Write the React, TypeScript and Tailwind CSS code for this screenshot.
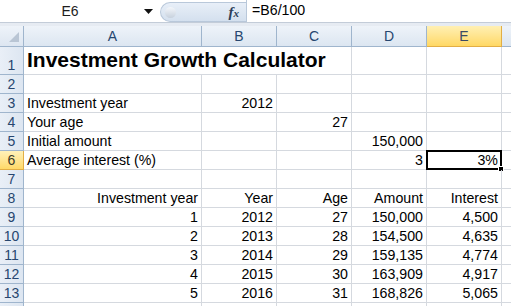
import React from 'react';

type Row = {
  n: number;
  cells: (string | null)[];
  align?: ('l' | 'r')[];
};

const grid = 'border-r border-b border-[#d5d9df]';
const R: ('l' | 'r')[] = ['r', 'r', 'r', 'r', 'r'];

const rows: Row[] = [
  { n: 2, cells: [null, null, null, null, null] },
  { n: 3, cells: ['Investment year', '2012', null, null, null] },
  { n: 4, cells: ['Your age', null, '27', null, null] },
  { n: 5, cells: ['Initial amount', null, null, '150,000', null] },
  { n: 6, cells: ['Average interest (%)', null, null, '3', '3%'] },
  { n: 7, cells: [null, null, null, null, null] },
  { n: 8, cells: ['Investment year', 'Year', 'Age', 'Amount', 'Interest'], align: R },
  { n: 9, cells: ['1', '2012', '27', '150,000', '4,500'], align: R },
  { n: 10, cells: ['2', '2013', '28', '154,500', '4,635'], align: R },
  { n: 11, cells: ['3', '2014', '29', '159,135', '4,774'], align: R },
  { n: 12, cells: ['4', '2015', '30', '163,909', '4,917'], align: R },
  { n: 13, cells: ['5', '2016', '31', '168,826', '5,065'], align: R },
  { n: 14, cells: [null, null, null, null, null] },
];

function RowHead({ n, active }: { n: number; active?: boolean }) {
  return (
    <div
      className={`flex items-end justify-center pb-[1px] text-[14px] leading-[16px] border-r border-b ${
        active
          ? 'bg-gradient-to-b from-[#fff1b8] to-[#ffd967] border-[#e2ae45] text-[#3a3a2a]'
          : 'bg-gradient-to-r from-[#e9eff7] to-[#dde6f1] border-[#9fb5cd] text-[#27466f]'
      }`}
    >
      {/* last row is only a sliver at the bottom edge */}
      {n < 14 ? n : null}
    </div>
  );
}

function Cell({ text, right, selected }: { text: string | null; right?: boolean; selected?: boolean }) {
  return (
    <div
      className={`relative flex items-end pb-[1px] px-[3px] text-[14.2px] leading-[16px] text-black ${grid} ${
        right ? 'justify-end' : 'justify-start'
      }`}
    >
      {text}
      {selected && (
        <>
          <div className="absolute -left-[1px] -top-[1px] -right-[1px] -bottom-[1px] border-2 border-black" />
          <div className="absolute -right-[3px] -bottom-[3px] h-[6px] w-[6px] border border-white bg-black" />
        </>
      )}
    </div>
  );
}

export default function App() {
  const cols = ['A', 'B', 'C', 'D', 'E'];
  return (
    <div className="h-[306px] w-[511px] overflow-hidden bg-white font-['Liberation_Sans',Arial,sans-serif]">
      {/* formula bar */}
      <div className="flex h-[23px] border-b border-[#c3ccd8] bg-white">
        <div className="flex w-[140px] items-center justify-center text-[14px] text-[#1d1d1d]">E6</div>
        <div className="flex w-[20px] items-center">
          <svg width="9" height="5" viewBox="0 0 9 5" className="ml-[4px]">
            <path d="M0 0h9L4.5 5z" fill="#111" />
          </svg>
        </div>
        <div className="mt-[2px] flex h-[20px] w-[86px] items-center justify-between rounded-l-full border border-r-0 border-[#b9c8da] bg-gradient-to-b from-[#e8eff8] to-[#d4e0ee] pl-[4px] pr-[7px]">
          <div className="h-[11px] w-[11px] rounded-full bg-gradient-to-b from-[#f4f7fb] to-[#c7d1dd]" />
          <span className="font-['Liberation_Serif',serif] text-[15px] font-bold italic text-[#2c3e58]">
            f<span className="text-[11px]">x</span>
          </span>
        </div>
        <div className="flex flex-1 items-center border-l border-[#b9c8da] pl-[5px] text-[14.2px] text-black">=B6/100</div>
      </div>
      <div className="h-[3px] bg-[#e6ebf2]" />

      <div className="grid grid-cols-[24px_178px_75px_75px_75px_75px_1fr] grid-rows-[21px_28px] auto-rows-[19px]">
        {/* column headers */}
        <div className="relative border-r border-b border-[#9fb5cd] bg-gradient-to-b from-[#eef3f9] to-[#dde6f1]">
          <svg width="10" height="10" viewBox="0 0 10 10" className="absolute right-[4px] bottom-[4px]">
            <path d="M10 0V10H0z" fill="#b9c5d4" />
          </svg>
        </div>
        {cols.map((c) => (
          <div
            key={c}
            className={`flex items-center justify-center border-r border-b text-[14px] leading-[16px] ${
              c === 'E'
                ? 'bg-gradient-to-b from-[#fff0b3] to-[#ffd863] border-[#e2ae45] text-[#3b4a64]'
                : 'bg-gradient-to-b from-[#eef3f9] to-[#dce6f1] border-[#9fb5cd] text-[#27466f]'
            }`}
          >
            {c}
          </div>
        ))}
        <div className="border-b border-[#9fb5cd] bg-gradient-to-b from-[#eef3f9] to-[#dce6f1]" />

        {/* row 1 */}
        <RowHead n={1} />
        <div className={`col-span-3 flex items-end whitespace-nowrap px-[3px] pb-[2px] text-[21px] leading-[24px] font-bold text-black ${grid}`}>
          Investment Growth Calculator
        </div>
        <div className={grid} />
        <div className={grid} />
        <div className="border-b border-[#d5d9df]" />

        {rows.map((r) => (
          <React.Fragment key={r.n}>
            <RowHead n={r.n} active={r.n === 6} />
            {r.cells.map((t, i) => (
              <Cell
                key={i}
                text={t}
                right={r.align ? r.align[i] === 'r' : i > 0}
                selected={r.n === 6 && i === 4}
              />
            ))}
            <div className="border-b border-[#d5d9df]" />
          </React.Fragment>
        ))}
      </div>
    </div>
  );
}
